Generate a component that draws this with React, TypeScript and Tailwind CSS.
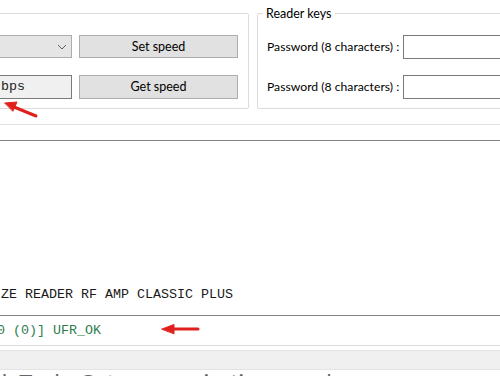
import React from 'react';

const ui = { fontFamily: 'Lato, "Noto Sans", sans-serif' };
const mono = { fontFamily: '"Liberation Mono", "Courier New", monospace' };

const Chevron = () => (
  <svg width="10" height="6" viewBox="0 0 10 6" className="shrink-0">
    <path d="M1 1 L5 5 L9 1" fill="none" stroke="#606060" strokeWidth="1" />
  </svg>
);

const WinButton: React.FC<{ label: string; className?: string }> = ({ label, className = '' }) => (
  <button
    type="button"
    className={`flex h-[23px] w-[159px] shrink-0 items-center justify-center border border-[#adadad] bg-[#e1e1e1] pt-[1px] text-[12.5px] text-black ${className}`}
  >
    {label}
  </button>
);

const PasswordRow = () => (
  <div className="flex h-[24px] items-center">
    <span className="w-[136px] shrink-0 whitespace-nowrap pt-[1px] text-[12.2px] text-black">Password (8 characters) :</span>
    <div className="h-[24px] w-[150px] shrink-0 border border-[#7a7a7a] bg-white" />
  </div>
);

const Arrows = () => (
  <svg className="pointer-events-none absolute left-0 top-0" width="500" height="376" viewBox="0 0 500 376">
    <g fill="#e0201c" stroke="#e0201c" strokeLinecap="round">
      <line x1="36" y1="116" x2="14" y2="107" strokeWidth="3" />
      <path d="M5 103 L17 102 L13 111 Z" />
      <line x1="198" y1="329" x2="172" y2="329" strokeWidth="3" />
      <path d="M162 329 L174 324.5 L174 333.5 Z" />
    </g>
  </svg>
);

export default function App() {
  return (
    <div className="relative h-[376px] w-[500px] overflow-hidden bg-white" style={ui}>
      <div className="flex gap-[8px] pt-[13px]">
        <div className="ml-[-160px] flex h-[96px] w-[409px] shrink-0 flex-col items-end gap-[17px] rounded-[2px] border border-[#dcdcdc] pr-[10px] pt-[21px]">
          <div className="flex gap-[7px]">
            <div className="flex h-[23px] w-[220px] items-center justify-end border border-[#adadad] bg-[#e5e5e5] pr-[4px]">
              <Chevron />
            </div>
            <WinButton label="Set speed" />
          </div>
          <div className="flex gap-[7px]">
            <div className="flex h-[24px] w-[131px] items-center border border-[#7a7a7a] bg-[#f0f0f0] pl-[3px]">
              <span className="whitespace-nowrap text-[13.33px] text-[#222]" style={mono}>115200 bps</span>
            </div>
            <WinButton label="Get speed" className="h-[24px]" />
          </div>
        </div>
        <div className="relative flex h-[96px] w-[300px] shrink-0 flex-col gap-[16px] rounded-[2px] border border-[#dcdcdc] pl-[9px] pt-[21px]">
          <span className="absolute left-[5px] top-[-8px] bg-white px-[3px] text-[12.5px] leading-[16px] text-black">Reader keys</span>
          <PasswordRow />
          <PasswordRow />
        </div>
      </div>

      <div className="mt-[15px] border-t border-[#e0e0e0]" />
      <div className="mt-[15px] flex h-[175px] flex-col justify-end border-t border-[#828282] pb-[12px]">
        <div className="whitespace-nowrap pl-[1px] text-[13.33px] leading-[16px] text-[#1a1a1a]" style={mono}>
          ZE READER RF AMP CLASSIC PLUS
        </div>
      </div>
      <div className="flex h-[30px] items-center border-t border-[#828282]">
        <span className="ml-[-3px] whitespace-nowrap text-[13.33px] text-[#2e7d4f]" style={mono}>
          0 (0)] UFR_OK
        </span>
      </div>
      <div className="border-t border-[#dcdcdc]" />
      <div className="mt-[4px] h-[20px] border-y border-[#e3e3e3] bg-[#f0f0f0]" />
      <div className="h-[20px] overflow-hidden">
        <div className="mt-[-1px] whitespace-nowrap pl-[2px] text-[22px] leading-[26px] text-[#666]">
          b Tool - Get communication speed
        </div>
      </div>

      <Arrows />
    </div>
  );
}
